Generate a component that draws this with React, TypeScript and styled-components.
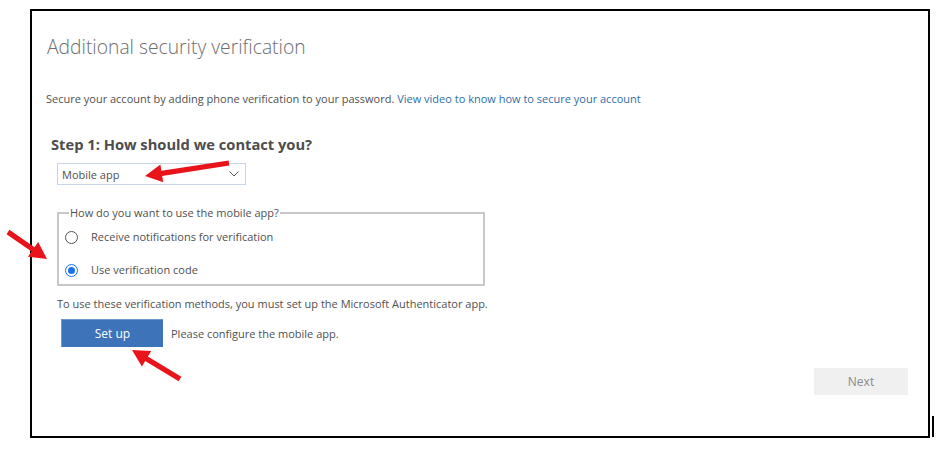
import styled, { createGlobalStyle } from 'styled-components';

const GlobalStyle = createGlobalStyle`
  html, body {
    margin: 0;
    padding: 0;
    background: #fff;
  }
  body {
    font-family: 'Open Sans', 'Liberation Sans', sans-serif;
    color: #505050;
  }
`;

const Page = styled.div`
  position: relative;
  width: 939px;
  height: 453px;
  display: flex;
  align-items: flex-start;
  padding: 9px 0 0 30px;
  box-sizing: border-box;
`;

const Frame = styled.div`
  width: 900px;
  height: 429px;
  border: 2px solid #000;
  box-sizing: border-box;
  display: flex;
  flex-direction: column;
  padding: 0 20px 0 15px;
`;

const ScanMark = styled.div`
  width: 2px;
  height: 21px;
  margin: 407px 0 0 2px;
  background: #000;
`;

const Title = styled.h1`
  margin: 23px 0 0;
  font-size: 19.3px;
  line-height: 26px;
  font-weight: 300;
  color: #6e6e6e;
`;

const Intro = styled.p`
  margin: 31px 0 0 -1px;
  font-size: 11px;
  line-height: 16px;
  color: #505050;
`;

const Link = styled.a`
  color: #2f6ea8;
  text-decoration: none;
`;

const Step = styled.section`
  display: flex;
  flex-direction: column;
  align-items: flex-start;
  margin: 27px 0 0 4px;
`;

const StepHeading = styled.h2`
  margin: 0;
  font-size: 14.7px;
  line-height: 20px;
  font-weight: 700;
  color: #4d4d4d;
`;

const Select = styled.div`
  margin: 9px 0 0 6px;
  width: 189px;
  height: 22px;
  box-sizing: border-box;
  border: 1px solid #c6d6e6;
  display: flex;
  align-items: center;
  justify-content: space-between;
  padding: 0 6px 0 4px;
  font-size: 11px;
  color: #505050;
`;

const Fieldset = styled.fieldset`
  margin: 21px 0 0 6px;
  width: 428px;
  height: 80px;
  box-sizing: border-box;
  border: 2px solid #c8c8c8;
  padding: 0 0 0 6px;
  display: flex;
  flex-direction: column;
`;

const Legend = styled.legend`
  font-size: 11px;
  line-height: 14px;
  padding: 0 1px;
  margin-left: 4px;
  color: #505050;
`;

const RadioRow = styled.label<{ $gap?: number }>`
  display: flex;
  align-items: center;
  gap: 13px;
  margin-top: ${(p) => p.$gap ?? 0}px;
  font-size: 11px;
  line-height: 16px;
  color: #505050;
`;

const RadioDot = styled.span<{ $checked?: boolean }>`
  width: 13px;
  height: 13px;
  border-radius: 50%;
  box-sizing: border-box;
  border: 1px solid ${(p) => (p.$checked ? '#1a73e8' : '#555')};
  display: flex;
  align-items: center;
  justify-content: center;
  &::after {
    content: '';
    width: 7px;
    height: 7px;
    border-radius: 50%;
    background: ${(p) => (p.$checked ? '#1a73e8' : 'transparent')};
  }
`;

const Note = styled.p`
  margin: 10px 0 0 6px;
  font-size: 11px;
  line-height: 16px;
  color: #505050;
`;

const SetupRow = styled.div`
  display: flex;
  align-items: center;
  gap: 8px;
  margin: 7px 0 0 10px;
  font-size: 11px;
  color: #505050;
`;

const PrimaryButton = styled.button`
  width: 102px;
  height: 28px;
  border: none;
  border-top: 1px solid #6d98cf;
  border-left: 1px solid #6d98cf;
  background: #3c73b9;
  color: #fff;
  font-family: inherit;
  font-size: 12px;
  padding: 0;
`;

const Footer = styled.div`
  display: flex;
  justify-content: flex-end;
  margin-top: 21px;
`;

const NextButton = styled.button`
  width: 94px;
  height: 27px;
  border: none;
  background: #f0f0f0;
  color: #8a8a8a;
  font-family: inherit;
  font-size: 12px;
  padding: 0;
`;

const Overlay = styled.svg`
  position: absolute;
  left: 0;
  top: 0;
  pointer-events: none;
`;

type Pt = [number, number];

function arrowPoints(tail: Pt, tip: Pt, shaft = 2.6, headLen = 17, headW = 9) {
  const dx = tip[0] - tail[0];
  const dy = tip[1] - tail[1];
  const len = Math.hypot(dx, dy);
  const ux = dx / len;
  const uy = dy / len;
  const nx = -uy;
  const ny = ux;
  const bx = tip[0] - ux * headLen;
  const by = tip[1] - uy * headLen;
  const pts: Pt[] = [
    [tail[0] + nx * shaft, tail[1] + ny * shaft],
    [bx + nx * shaft, by + ny * shaft],
    [bx + nx * headW, by + ny * headW],
    tip,
    [bx - nx * headW, by - ny * headW],
    [bx - nx * shaft, by - ny * shaft],
    [tail[0] - nx * shaft, tail[1] - ny * shaft],
  ];
  return pts.map((p) => p.join(',')).join(' ');
}

const arrows: { tail: Pt; tip: Pt }[] = [
  { tail: [229, 163], tip: [145, 176] },
  { tail: [8, 232], tip: [47, 259] },
  { tail: [180, 379], tip: [132, 350] },
];

function Chevron() {
  return (
    <svg width="10" height="6" viewBox="0 0 10 6">
      <path d="M0.5 0.5 L5 5 L9.5 0.5" fill="none" stroke="#555" strokeWidth="1" />
    </svg>
  );
}

export default function App() {
  return (
    <>
      <GlobalStyle />
      <Page>
        <Frame>
          <Title>Additional security verification</Title>
          <Intro>
            Secure your account by adding phone verification to your password.{' '}
            <Link href="#">View video to know how to secure your account</Link>
          </Intro>
          <Step>
            <StepHeading>Step 1: How should we contact you?</StepHeading>
            <Select>
              <span>Mobile app</span>
              <Chevron />
            </Select>
            <Fieldset>
              <Legend>How do you want to use the mobile app?</Legend>
              <RadioRow $gap={9}>
                <RadioDot />
                Receive notifications for verification
              </RadioRow>
              <RadioRow $gap={17}>
                <RadioDot $checked />
                Use verification code
              </RadioRow>
            </Fieldset>
            <Note>
              To use these verification methods, you must set up the Microsoft Authenticator app.
            </Note>
            <SetupRow>
              <PrimaryButton>Set up</PrimaryButton>
              Please configure the mobile app.
            </SetupRow>
          </Step>
          <Footer>
            <NextButton>Next</NextButton>
          </Footer>
        </Frame>
        <ScanMark />
        <Overlay width="939" height="453">
          {arrows.map((a, i) => (
            <polygon key={i} points={arrowPoints(a.tail, a.tip)} fill="#e8141a" />
          ))}
        </Overlay>
      </Page>
    </>
  );
}
